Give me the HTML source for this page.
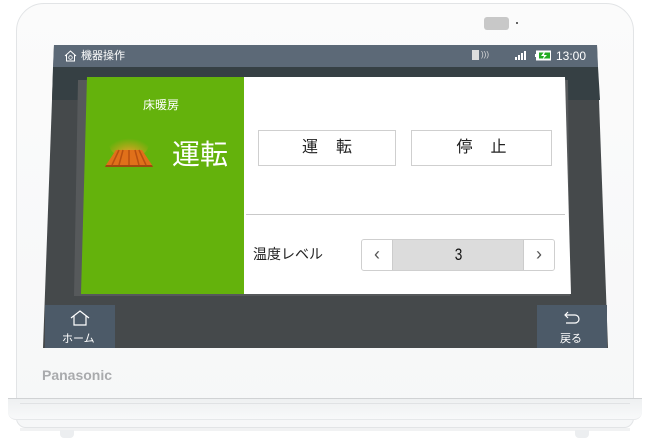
<!DOCTYPE html>
<html><head><meta charset="utf-8"><style>
*{margin:0;padding:0;box-sizing:border-box}
body{width:650px;height:443px;background:#fff;position:relative;overflow:hidden;font-family:"Liberation Sans","Noto Sans CJK JP",sans-serif}
.a{position:absolute}
</style></head><body>
<!-- device body -->
<div class="a" style="left:16px;top:3px;width:618px;height:425px;border:1px solid #e2e4e6;border-radius:28px 28px 10px 10px;background:linear-gradient(#fbfbfb,#f6f7f8)"></div>
<div class="a" style="left:8px;top:398px;width:634px;height:22px;background:linear-gradient(#eef0f1,#f8f9fa);border-top:1px solid #d0d2d4;border-bottom:1px solid #e6e8ea;border-radius:0 0 8px 8px"></div>
<div class="a" style="left:20px;top:403px;width:610px;height:1px;background:#e0e2e4"></div>
<div class="a" style="left:20px;top:428px;width:610px;height:3px;background:#f1f2f3"></div>
<div class="a" style="left:60px;top:430px;width:14px;height:8px;background:#eceef0;border-radius:0 0 4px 4px"></div>
<div class="a" style="left:575px;top:430px;width:14px;height:8px;background:#eceef0;border-radius:0 0 4px 4px"></div>
<!-- grille -->
<div class="a" style="left:484px;top:17px;width:25px;height:13px;background:#c8c8c8;border-radius:3px"></div>
<div class="a" style="left:516px;top:22px;width:2px;height:2px;background:#333;border-radius:50%"></div>
<!-- screen -->
<div class="a" style="left:0;top:0;width:650px;height:443px;background:#45494b;clip-path:polygon(54px 45px,597px 45px,608px 348px,43px 348px)"></div>
<div class="a" style="left:0;top:0;width:650px;height:443px;background:#5c6977;clip-path:polygon(54px 45px,597px 45px,598px 67px,53px 67px)"></div>
<div class="a" style="left:0;top:0;width:650px;height:443px;background:#364044;clip-path:polygon(53px 67px,598px 67px,600px 100px,52px 100px)"></div>
<!-- back cards -->
<div class="a" style="left:0;top:0;width:650px;height:443px;background:#56595b;clip-path:polygon(78px 80px,568px 80px,570px 296px,74px 296px)"></div>
<!-- dialog -->
<div class="a" style="left:0;top:0;width:650px;height:443px;background:#64b20c;clip-path:polygon(87px 77px,244px 77px,244px 294px,81px 294px)"></div>
<div class="a" style="left:0;top:0;width:650px;height:443px;background:#fff;clip-path:polygon(244px 77px,565px 77px,571px 294px,244px 294px)"></div>
<!-- status bar content -->
<svg class="a" style="left:64px;top:50px" width="13" height="12" viewBox="0 0 13 12"><path d="M1 6L6.5 1L12 6M2.5 5V11H10.5V5" fill="none" stroke="#fff" stroke-width="1"/><circle cx="6.5" cy="7.5" r="1.8" fill="none" stroke="#fff" stroke-width=".8"/></svg>
<div class="a" style="left:81px;top:49px;font-size:11px;color:#fff;line-height:14px">機器操作</div>
<div class="a" style="left:472px;top:50px;width:7px;height:10px;background:#ddd"></div>
<div class="a" style="left:481px;top:50px;font-size:8px;color:#ddd">)))</div>
<svg class="a" style="left:515px;top:50px" width="22" height="11"><rect x="0" y="7" width="2" height="3" fill="#fff"/><rect x="3" y="5" width="2" height="5" fill="#fff"/><rect x="6" y="3" width="2" height="7" fill="#fff"/><rect x="9" y="1" width="2" height="9" fill="#fff"/></svg>
<svg class="a" style="left:535px;top:50px" width="18" height="11"><rect x="1.5" y="1" width="14" height="9" fill="#fff" stroke="#fff"/><rect x="4" y="2.5" width="11" height="6" fill="#22aa22"/><path d="M9 2L6 6H9L7.5 9.5L12 5H9L10 2Z" fill="#fff"/><rect x="0" y="4" width="1.5" height="3" fill="#fff"/></svg>
<div class="a" style="left:556px;top:49px;font-size:12px;color:#fff;line-height:14px">13:00</div>
<!-- green panel content -->
<div class="a" style="left:143px;top:96px;font-size:12px;color:#fff">床暖房</div>
<svg class="a" style="left:103px;top:128px" width="52" height="40" viewBox="0 0 52 40"><defs><radialGradient id="g" cx=".5" cy=".9" r=".6"><stop offset="0" stop-color="#f5a030"/><stop offset="1" stop-color="#f0a020" stop-opacity="0"/></radialGradient></defs><ellipse cx="26" cy="16" rx="20" ry="14" fill="url(#g)"/><path d="M13 22H39L49 37H3Z" fill="#e0701a"/><path d="M3 37H49L50 39H2Z" fill="#a04a10"/><path d="M20 22L16 37M26 22V37M32 22L36 37M16 22L9 37M36 22L43 37" stroke="#b85010" stroke-width="1.5"/></svg>
<div class="a" style="left:172px;top:139px;font-size:28px;color:#fff;line-height:32px">運転</div>
<!-- buttons -->
<div class="a" style="left:258px;top:130px;width:138px;height:36px;border:1px solid #cfcfcf;text-align:center;line-height:34px;font-size:16px;color:#222;letter-spacing:18px;padding-left:18px">運転</div>
<div class="a" style="left:411px;top:130px;width:141px;height:36px;border:1px solid #cfcfcf;text-align:center;line-height:34px;font-size:16px;color:#222;letter-spacing:18px;padding-left:18px">停止</div>
<div class="a" style="left:246px;top:214px;width:319px;height:1px;background:#c9c9c9"></div>
<div class="a" style="left:253px;top:244px;font-size:14px;color:#222">温度レベル</div>
<div class="a" style="left:361px;top:239px;width:194px;height:32px;border:1px solid #cfcfcf;border-radius:3px;background:#dcdcdc;overflow:hidden">
<div class="a" style="left:0;top:0;width:31px;height:30px;background:#fff;border-right:1px solid #ccc;text-align:center;line-height:28px;color:#555;font-size:18px">‹</div>
<div class="a" style="left:31px;top:0;width:131px;height:30px;text-align:center;line-height:30px;font-size:17px;color:#111;transform:scaleX(.8)">3</div>
<div class="a" style="right:0;top:0;width:31px;height:30px;background:#fff;border-left:1px solid #ccc;text-align:center;line-height:28px;color:#555;font-size:18px">›</div>
</div>
<!-- bottom buttons -->
<div class="a" style="left:45px;top:305px;width:70px;height:43px;background:#4c5a68"></div>
<svg class="a" style="left:70px;top:310px" width="20" height="16"><path d="M1 8L10 1L19 8M4 6V15H16V6" fill="none" stroke="#fff" stroke-width="1.2"/></svg>
<div class="a" style="left:62px;top:330px;font-size:11px;color:#fff">ホーム</div>
<div class="a" style="left:537px;top:305px;width:70px;height:43px;background:#4c5a68"></div>
<svg class="a" style="left:563px;top:310px" width="18" height="16"><path d="M5 2L2 5L5 8M2 5H12A4 4 0 0 1 12 13H3" fill="none" stroke="#fff" stroke-width="1.2"/></svg>
<div class="a" style="left:560px;top:330px;font-size:11px;color:#fff">戻る</div>
<div class="a" style="left:42px;top:367px;font-size:14px;font-weight:bold;color:#a9abad">Panasonic</div>
</body></html>
